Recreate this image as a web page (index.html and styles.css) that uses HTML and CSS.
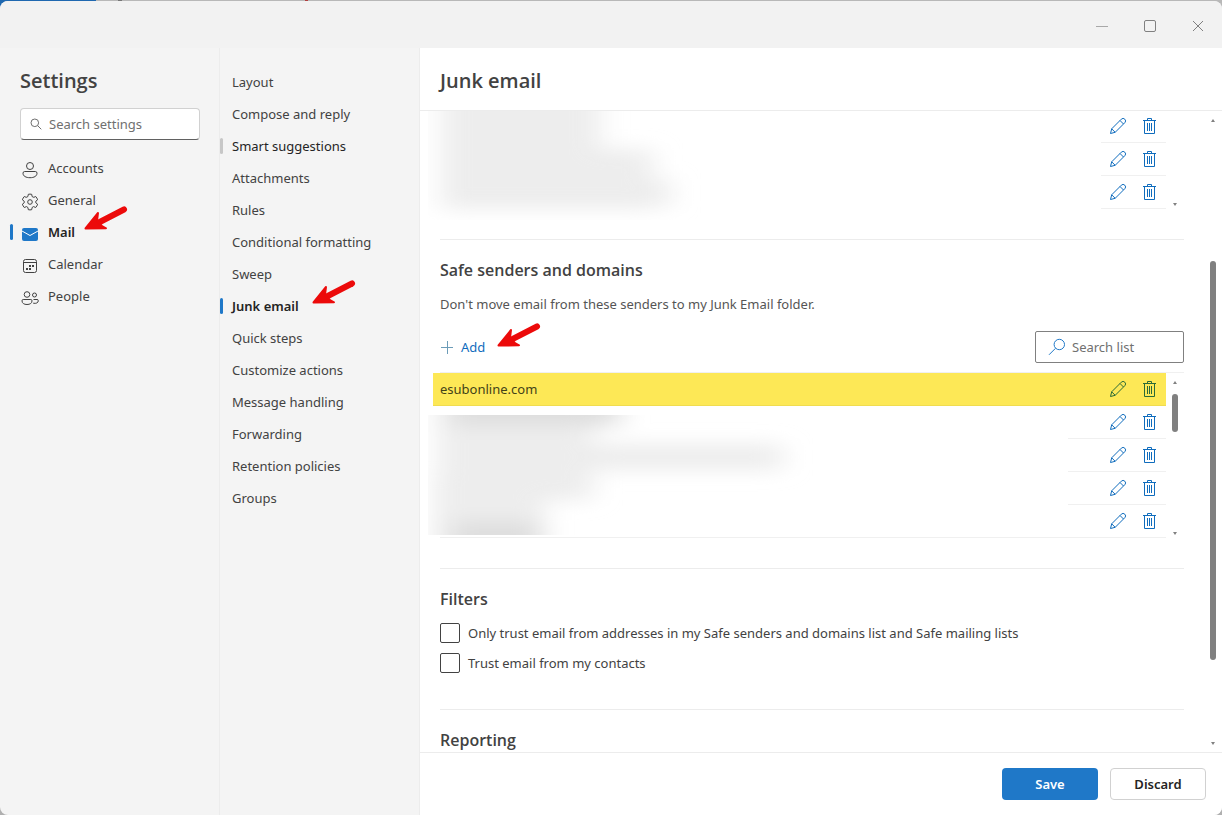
FILE: index.html
```
<!DOCTYPE html>
<html lang="en">
<head>
    <meta charset="UTF-8">
    <meta name="viewport" content="width=device-width, initial-scale=1.0">
    <title>Settings - Junk email</title>
    <link rel="stylesheet" href="styles.css">
</head>
<body>
    <svg class="defs" width="0" height="0" aria-hidden="true">
        <symbol id="pencil" viewBox="0 0 18 18">
            <path d="M1.5 16.5 L2.7 11.8 L12.3 2.2 A2.3 2.3 0 0 1 15.8 5.7 L6.2 15.3 Z M2.7 11.8 L6.2 15.3 M11 3.5 L14.5 7"/>
        </symbol>
        <symbol id="trash" viewBox="0 0 14 18">
            <path d="M0 3.5 H13 M4.5 3.5 V1.5 H8.5 V3.5 M1.5 3.5 V16.5 H11.5 V3.5 M4.5 6 V14 M6.5 6 V14 M8.5 6 V14"/>
        </symbol>
        <symbol id="arrow" viewBox="0 0 44 26">
            <path class="shaft" d="M9 19.5 L40 3.5"/>
            <path class="head" d="M1.5 22.5 L14 7 L13 15 L18 20 L22 22.3 Z"/>
        </symbol>
        <filter id="smudge" x="-30%" y="-100%" width="160%" height="300%">
            <feGaussianBlur stdDeviation="14 9"/>
        </filter>
    </svg>

    <div class="window">
        <header class="titlebar">
            <button type="button" class="minimize" aria-label="Minimize"><svg width="14" height="14"><path d="M1 7.5 H13"/></svg></button>
            <button type="button" aria-label="Maximize"><svg width="14" height="14"><rect x="1.5" y="1.5" width="11" height="11" rx="1.5"/></svg></button>
            <button type="button" aria-label="Close"><svg width="14" height="14"><path d="M2 2 L12 12 M12 2 L2 12"/></svg></button>
        </header>

        <div class="panes">
            <nav class="main-nav">
                <h1>Settings</h1>
                <label class="search">
                    <svg width="12" height="12" viewBox="0 0 12 12"><circle cx="4.8" cy="4.8" r="3.8"/><path d="M7.6 7.6 L11.3 11.3"/></svg>
                    <input type="text" placeholder="Search settings" aria-label="Search settings">
                </label>
                <ul>
                    <li><a href="#"><svg width="18" height="18" viewBox="0 0 18 18"><circle cx="9" cy="5" r="3.5"/><path d="M3.7 10.5 H14.3 Q16 10.5 16 12.2 C16 15.2 13 16.7 9 16.7 S2 15.2 2 12.2 Q2 10.5 3.7 10.5 Z"/></svg>Accounts</a></li>
                    <li><a href="#"><svg width="18" height="18" viewBox="0 0 18 18"><circle cx="9" cy="9" r="2.3"/><path d="M7.3 1.3 Q9 0.9 10.7 1.3 L11.1 3.5 Q12 4.2 12.9 4.3 L14.7 3.5 Q16.1 5 16.6 6.8 L14.8 8.2 V9.8 L16.6 11.2 Q16.1 13 14.7 14.5 L12.5 13.6 L11.1 14.5 L10.7 16.7 Q9 17.1 7.3 16.7 L6.9 14.5 L5.5 13.6 L3.3 14.5 Q1.9 13 1.4 11.2 L3.2 9.8 V8.2 L1.4 6.8 Q1.9 5 3.3 3.5 L5.1 4.3 Q6 4.2 6.9 3.5 Z"/></svg>General</a></li>
                    <li><a href="#" class="active"><svg class="mail" width="18" height="18" viewBox="0 0 18 18"><rect x="1" y="3" width="16" height="13" rx="2"/><path d="M1 6 L9 10.5 L17 6"/></svg>Mail</a><svg class="pointer" width="44" height="26"><use href="#arrow"/></svg></li>
                    <li><a href="#"><svg width="18" height="18" viewBox="0 0 18 18"><rect x="2.5" y="2.5" width="13" height="13" rx="2"/><path d="M2.5 5.5 H15.5"/><path class="dots" d="M8 8 h2 v2 h-2 z M11 8 h2 v2 h-2 z M5 11 h2 v2 h-2 z M8 11 h2 v2 h-2 z"/></svg>Calendar</a></li>
                    <li><a href="#"><svg width="18" height="18" viewBox="0 0 18 18"><circle cx="6" cy="5.5" r="2.8"/><circle cx="13.5" cy="6" r="2"/><path d="M2.2 10.5 H9.8 Q11 10.5 11 11.8 C11 14.3 9 15.5 6 15.5 S1 14.3 1 11.8 Q1 10.5 2.2 10.5 Z M12.5 10.5 H16 Q17.3 10.5 17.3 11.7 C17.3 13.8 15.2 14.8 12.2 14.2"/></svg>People</a></li>
                </ul>
            </nav>

            <nav class="sub-nav">
                <ul>
                    <li><a href="#">Layout</a></li>
                    <li><a href="#">Compose and reply</a></li>
                    <li><a href="#" class="hovered">Smart suggestions</a></li>
                    <li><a href="#">Attachments</a></li>
                    <li><a href="#">Rules</a></li>
                    <li><a href="#">Conditional formatting</a></li>
                    <li><a href="#">Sweep</a></li>
                    <li><a href="#" class="active">Junk email</a><svg class="pointer" width="44" height="26"><use href="#arrow"/></svg></li>
                    <li><a href="#">Quick steps</a></li>
                    <li><a href="#">Customize actions</a></li>
                    <li><a href="#">Message handling</a></li>
                    <li><a href="#">Forwarding</a></li>
                    <li><a href="#">Retention policies</a></li>
                    <li><a href="#">Groups</a></li>
                </ul>
            </nav>

            <main>
                <h2 class="page-title">Junk email</h2>
                <div class="scroller">
                    <div class="content">
                        <section>
                            <div class="list-box blocked">
                                <ul class="senders">
                                    <li><button type="button" aria-label="Edit"><svg width="18" height="18"><use href="#pencil"/></svg></button><button type="button" aria-label="Delete"><svg width="14" height="18"><use href="#trash"/></svg></button></li>
                                    <li><button type="button" aria-label="Edit"><svg width="18" height="18"><use href="#pencil"/></svg></button><button type="button" aria-label="Delete"><svg width="14" height="18"><use href="#trash"/></svg></button></li>
                                    <li><button type="button" aria-label="Edit"><svg width="18" height="18"><use href="#pencil"/></svg></button><button type="button" aria-label="Delete"><svg width="14" height="18"><use href="#trash"/></svg></button></li>
                                </ul>
                                <div class="scrollbar"><i class="up hidden"></i><span class="track"></span><i class="down"></i></div>
                                <svg class="redacted" aria-hidden="true">
                                    <g filter="url(#smudge)">
                                        <rect x="14" y="-30" width="158" height="80"/>
                                        <rect x="14" y="38" width="210" height="60"/>
                                        <rect x="100" y="68" width="142" height="28"/>
                                    </g>
                                </svg>
                            </div>
                        </section>

                        <section>
                            <h3>Safe senders and domains</h3>
                            <p>Don't move email from these senders to my Junk Email folder.</p>
                            <div class="toolbar">
                                <button type="button" class="add"><svg width="14" height="14"><path d="M1 7.5 H13 M7.5 1 V14"/></svg>Add</button>
                                <svg class="pointer" width="44" height="26"><use href="#arrow"/></svg>
                                <label class="search-list">
                                    <svg width="18" height="18" viewBox="0 0 18 18"><circle cx="11.3" cy="6.5" r="5.2"/><path d="M7.5 10.3 L1 16.8"/></svg>
                                    <input type="text" placeholder="Search list" aria-label="Search list">
                                </label>
                            </div>
                            <div class="list-box safe">
                                <ul class="senders">
                                    <li class="marked"><span>esubonline.com</span><button type="button" aria-label="Edit"><svg width="18" height="18"><use href="#pencil"/></svg></button><button type="button" aria-label="Delete"><svg width="14" height="18"><use href="#trash"/></svg></button></li>
                                    <li><button type="button" aria-label="Edit"><svg width="18" height="18"><use href="#pencil"/></svg></button><button type="button" aria-label="Delete"><svg width="14" height="18"><use href="#trash"/></svg></button></li>
                                    <li><button type="button" aria-label="Edit"><svg width="18" height="18"><use href="#pencil"/></svg></button><button type="button" aria-label="Delete"><svg width="14" height="18"><use href="#trash"/></svg></button></li>
                                    <li><button type="button" aria-label="Edit"><svg width="18" height="18"><use href="#pencil"/></svg></button><button type="button" aria-label="Delete"><svg width="14" height="18"><use href="#trash"/></svg></button></li>
                                    <li><button type="button" aria-label="Edit"><svg width="18" height="18"><use href="#pencil"/></svg></button><button type="button" aria-label="Delete"><svg width="14" height="18"><use href="#trash"/></svg></button></li>
                                </ul>
                                <div class="scrollbar"><i class="up"></i><span class="track"><b></b></span><i class="down"></i></div>
                                <svg class="redacted" aria-hidden="true">
                                    <g filter="url(#smudge)">
                                        <rect x="10" y="-20" width="154" height="105"/>
                                        <rect x="6" y="60" width="110" height="100"/>
                                        <rect x="16" y="29" width="338" height="26"/>
                                        <rect class="dark" x="22" y="-30" width="170" height="41"/>
                                        <rect class="dark" x="24" y="106" width="88" height="46"/>
                                    </g>
                                </svg>
                            </div>
                        </section>

                        <section class="filters">
                            <h3>Filters</h3>
                            <label><input type="checkbox">Only trust email from addresses in my Safe senders and domains list and Safe mailing lists</label>
                            <label><input type="checkbox">Trust email from my contacts</label>
                        </section>

                        <section>
                            <h3>Reporting</h3>
                        </section>
                    </div>
                    <div class="scrollbar page-scroll"><i class="up"></i><span class="track"><b></b></span><i class="down"></i></div>
                </div>
                <footer>
                    <button type="button" class="save">Save</button>
                    <button type="button" class="discard">Discard</button>
                </footer>
            </main>
        </div>
    </div>
</body>
</html>
```
FILE: styles.css
```
* {
    box-sizing: border-box;
}

body {
    margin: 0;
    height: 100vh;
    padding-top: 1px;
    overflow: hidden;
    font-family: "Noto Sans", "Open Sans", sans-serif;
    font-size: 13px;
    line-height: 20px;
    color: #424242;
    /* what shows of the desktop behind the window */
    background: linear-gradient(to right, #1f68b0 96px, #b8b8b8 96px, #b8b8b8 118px, #777 118px, #777 122px, #b8b8b8 122px, #b8b8b8 305px, #b04040 305px, #b04040 308px, #b8b8b8 308px) top / 100% 10px no-repeat #b0b0b0;
}

h1, h2, h3, p, ul {
    margin: 0;
    padding: 0;
}

h1, h2, h3 {
    font-family: "Open Sans", "Noto Sans", sans-serif;
    font-weight: 600;
}

ul {
    list-style: none;
}

button, input {
    font: inherit;
    color: inherit;
}

button {
    padding: 0;
    border: none;
    background: none;
    cursor: pointer;
}

svg {
    display: block;
    flex: none;
    fill: none;
    stroke: currentColor;
}

.defs {
    position: absolute;
}

.window {
    display: flex;
    flex-direction: column;
    height: 100%;
    border-radius: 8px;
    overflow: hidden;
    background: #f4f4f4;
}

.titlebar {
    display: flex;
    justify-content: flex-end;
    height: 47px;
    flex: none;
    background: #f2f2f2;
}

.titlebar button {
    display: grid;
    place-items: center;
    width: 48px;
    padding-top: 3px;
    color: #808080;
}

.titlebar .minimize {
    color: #a8a8a8;
}

.panes {
    flex: 1;
    display: flex;
    min-height: 0;
}

/* navigation */
.main-nav {
    width: 220px;
    padding: 18px 19px 18px 20px;
    border-right: 1px solid #ececec;
}

h1, .page-title {
    font-size: 20px;
    line-height: 30px;
}

.search {
    display: flex;
    align-items: center;
    gap: 7px;
    height: 32px;
    margin: 12px 0;
    padding: 0 9px;
    border: 1px solid #d1d1d1;
    border-bottom-color: #616161;
    border-radius: 4px;
    background: #fff;
    color: #707070;
}

.search input, .search-list input {
    width: 100%;
    min-width: 0;
    padding: 0;
    border: none;
    outline: none;
    background: none;
}

input::placeholder {
    color: #707070;
    opacity: 1;
}

nav li {
    position: relative;
}

nav a {
    display: flex;
    align-items: center;
    height: 32px;
    color: #424242;
    text-decoration: none;
}

.main-nav a {
    gap: 9px;
    padding-left: 1px;
}

.main-nav a svg {
    margin-top: 3px;
}

.dots {
    fill: currentColor;
    stroke: none;
}

.mail {
    fill: #1f78c8;
    stroke: none;
}

.mail path {
    fill: none;
    stroke: #fff;
}

.sub-nav {
    width: 200px;
    padding: 18px 12px;
    border-right: 1px solid #ececec;
}

nav a.active {
    font-weight: 600;
    color: #242424;
}

nav a.hovered {
    color: #242424;
}

.active::before, .hovered::before {
    content: "";
    position: absolute;
    left: -12px;
    top: 8px;
    width: 3px;
    height: 16px;
    border-radius: 2px;
    background: #1f78c8;
}

.main-nav .active::before {
    left: -10px;
}

.hovered::before {
    background: #c7c7c7;
}

.shaft {
    stroke: #ec0a0a;
    stroke-width: 6;
    stroke-linecap: round;
}

.head {
    fill: #ec0a0a;
    stroke: #ec0a0a;
    stroke-width: 2;
    stroke-linejoin: round;
}

.main-nav .pointer {
    position: absolute;
    left: 64px;
    top: -10px;
}

.sub-nav .pointer {
    position: absolute;
    left: 80px;
    top: -10px;
}

/* content */
main {
    flex: 1;
    min-width: 0;
    display: flex;
    flex-direction: column;
    background: #fff;
}

.page-title {
    padding: 18px 20px 14px;
    border-bottom: 1px solid #ececec;
}

.scroller {
    flex: 1;
    display: flex;
    min-height: 0;
    overflow: hidden;
}

.content {
    flex: 1;
    min-width: 0;
    padding: 0 20px;
}

section + section {
    border-top: 1px solid #ececec;
    margin-top: 30px;
    padding-top: 20px;
}

h3 {
    font-size: 16px;
    line-height: 20px;
}

p {
    margin-top: 14px;
    color: #555;
}

.toolbar {
    display: flex;
    align-items: center;
    height: 32px;
    margin: 17px 0 9px;
}

.toolbar .pointer {
    margin: 0 auto 22px 12px;
}

.add {
    display: flex;
    align-items: center;
    gap: 7px;
    color: #0f6cbd;
}

.add svg {
    color: #6c9cb8;
}

.search-list {
    display: flex;
    align-items: center;
    gap: 6px;
    width: 149px;
    height: 32px;
    padding: 0 12px;
    border: 1px solid #808080;
    border-radius: 2px;
}

.search-list svg {
    color: #1f78c8;
}

.list-box {
    position: relative;
    display: flex;
}

.senders {
    flex: 1;
}

.senders li {
    display: flex;
    align-items: center;
    justify-content: flex-end;
    gap: 16px;
    height: 33px;
    padding-right: 9px;
    border-bottom: 1px solid #f0f0f0;
    color: #0f6cbd;
}

.senders span {
    margin-right: auto;
    color: #424218;
}

.senders .marked {
    margin-left: -7px;
    padding-left: 7px;
    border-color: #f0dc50;
    background: #fde856;
    color: #2a6a38;
}

.blocked {
    height: 98px;
    align-items: flex-end;
}

.blocked .scrollbar {
    height: 100%;
}

.safe {
    border-top: 1px solid #f0f0f0;
}

/* blurred addresses */
.redacted {
    position: absolute;
    left: -12px;
    background: #fff;
    overflow: hidden;
}

.redacted rect {
    fill: #ededed;
    stroke: none;
}

.redacted .dark {
    fill: #dedede;
}

.blocked .redacted {
    top: 0;
    width: calc(100% - 71px);
    height: 109px;
}

.safe .redacted {
    top: 42px;
    width: calc(100% - 104px);
    height: 120px;
}

/* scrollbars */
.scrollbar {
    display: flex;
    flex-direction: column;
    align-items: center;
    width: 18px;
    padding-top: 4px;
}

.scrollbar i {
    display: grid;
    place-items: center;
    height: 10px;
}

.scrollbar i::before {
    content: "";
    border: 2px solid transparent;
}

.scrollbar .up::before {
    border-top: none;
    border-bottom: 3px solid #808080;
}

.scrollbar .down::before {
    border-bottom: none;
    border-top: 3px solid #808080;
}

.scrollbar .hidden {
    visibility: hidden;
}

.track {
    flex: 1;
    display: grid;
    grid-template-rows: 7fr 38fr 96fr;
}

.track b {
    grid-row: 2;
    width: 6px;
    border-radius: 3px;
    background: #808080;
}

.page-scroll {
    padding-bottom: 4px;
}

.page-scroll .track {
    grid-template-rows: 136fr 399fr 78fr;
}

.filters {
    padding-bottom: 6px;
}

.filters h3 {
    margin-bottom: 14px;
}

.filters label {
    display: flex;
    align-items: center;
    gap: 8px;
    margin-top: 10px;
}

.filters input {
    appearance: none;
    width: 20px;
    height: 20px;
    margin: 0;
    border: 1px solid #424242;
    border-radius: 2px;
}

footer {
    display: flex;
    justify-content: flex-end;
    gap: 12px;
    padding: 15px 16px;
    border-top: 1px solid #ececec;
}

footer button {
    width: 96px;
    height: 32px;
    border-radius: 4px;
    font-weight: 600;
}

.save {
    background: #1f78c8;
    color: #fff;
}

.discard {
    border: 1px solid #d1d1d1;
    color: #242424;
}
```
